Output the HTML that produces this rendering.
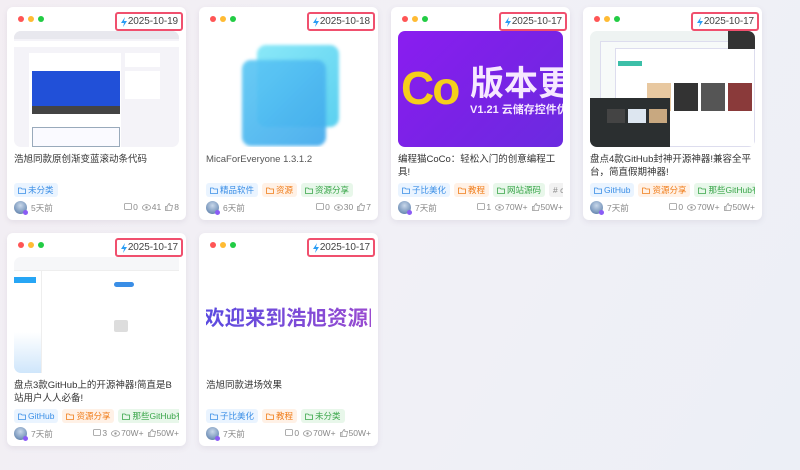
<!DOCTYPE html>
<html><head><meta charset="utf-8"><style>
*{margin:0;padding:0;box-sizing:border-box}
body{width:800px;height:470px;overflow:hidden;position:relative;font-family:"Liberation Sans","Noto Sans CJK SC",sans-serif;background:linear-gradient(120deg,#f3eef3 0%,#f1f0f6 50%,#eceff6 100%)}
.card{position:absolute;width:179px;height:213px;background:#fff;border-radius:6px;box-shadow:0 2px 6px rgba(120,110,140,.12);overflow:hidden}
.dots{position:absolute;left:11px;top:9px}
.dots i{position:absolute;top:0;width:6px;height:6px;border-radius:50%}
.date{position:absolute;right:3px;top:5px;height:19px;border:2px solid #f0506e;border-radius:3px;font-size:10px;color:#444;line-height:15px;padding:0 3px 0 3px;display:flex;align-items:center;letter-spacing:-.1px}
.img{position:absolute;left:7px;top:24px;width:165px;height:116px;border-radius:7px;overflow:hidden}
.title{position:absolute;left:7px;top:146px;width:165px;font-size:9.5px;line-height:13px;color:#333}
.tags{position:absolute;left:7px;top:176px;width:165px;height:14px;white-space:nowrap;overflow:hidden;font-size:8.5px}
.tag{display:inline-block;height:14px;line-height:14px;padding:0 4px;border-radius:3px;margin-right:4px;vertical-align:top}
.tag svg{vertical-align:-1px;margin-right:2px}
.b{background:#eaf4ff;color:#3a8ee6}.o{background:#fff1e6;color:#f07d1a}.g{background:#e8f7ea;color:#3aa64a}.gr{background:#f2f2f2;color:#888}
.foot{position:absolute;left:7px;top:194px;width:165px;height:14px;font-size:8.5px;color:#888}
.av{position:absolute;left:0;top:0;width:13px;height:13px;border-radius:50%;background:radial-gradient(circle at 50% 35%,#c9d8ea 0,#7f9cc0 60%,#4d6d99 100%)}
.av:after{content:"";position:absolute;right:-1px;bottom:-1px;width:5px;height:5px;border-radius:50%;background:#8a5cf5}
.ago{position:absolute;left:17px;top:1px}
.st{position:absolute;right:0;top:1px;display:flex;gap:4px;align-items:center}
.st span{display:flex;align-items:center;gap:1px}
</style></head><body>

<div class="card" style="left:7px;top:7px">
 <div class="dots"><i style="left:0;background:#f55"></i><i style="left:10px;background:#fb3"></i><i style="left:20px;background:#2c4"></i></div>
 <div class="date"><svg width="8" height="10" viewBox="0 0 8 10"><path d="M5 0L1 6h3L3 10l4-6H4z" fill="#2a9df4"/></svg>2025-10-19</div>
 <div class="img" style="background:#f4f3f8">
  <div style="position:absolute;left:0;top:0;width:165px;height:8px;background:#e8e8ee"></div>
  <div style="position:absolute;left:0;top:10px;width:165px;height:6px;background:#fff"></div>
  <div style="position:absolute;left:15px;top:22px;width:92px;height:94px;background:#fff"></div>
  <div style="position:absolute;left:18px;top:40px;width:88px;height:35px;background:#2150d8"></div>
  <div style="position:absolute;left:18px;top:75px;width:88px;height:8px;background:#444"></div>
  <div style="position:absolute;left:18px;top:96px;width:88px;height:20px;border:1px solid #9ab;background:#fafaff"></div>
  <div style="position:absolute;left:111px;top:22px;width:35px;height:14px;background:#fff"></div>
  <div style="position:absolute;left:111px;top:40px;width:35px;height:28px;background:#fff"></div>
 </div>
 <div class="title">浩旭同款原创渐变蓝滚动条代码</div>
 <div class="tags"><span class="tag b"><svg width="8" height="7" viewBox="0 0 8 7"><path d="M.5 1h2.5l1 1h3.5v4.5h-7z" fill="none" stroke="currentColor" stroke-width=".8"/></svg>未分类</span></div>
 <div class="foot"><div class="av"></div><span class="ago">5天前</span><div class="st"><span><svg width="8" height="8" viewBox="0 0 8 8"><rect x=".5" y=".5" width="7" height="6" rx="1" fill="none" stroke="#999" stroke-width=".8"/></svg>0</span><span><svg width="9" height="7" viewBox="0 0 9 7"><ellipse cx="4.5" cy="3.5" rx="4" ry="2.8" fill="none" stroke="#999" stroke-width=".8"/><circle cx="4.5" cy="3.5" r="1.2" fill="#999"/></svg>41</span><span><svg width="8" height="8" viewBox="0 0 8 8"><path d="M.5 3.5h1.5v4h-1.5zM2 3.5l2-3c1 0 1 1 .8 2h2.7l-1 5H2" fill="none" stroke="#999" stroke-width=".8"/></svg>8</span></div></div>
</div>

<div class="card" style="left:199px;top:7px">
 <div class="dots"><i style="left:0;background:#f55"></i><i style="left:10px;background:#fb3"></i><i style="left:20px;background:#2c4"></i></div>
 <div class="date"><svg width="8" height="10" viewBox="0 0 8 10"><path d="M5 0L1 6h3L3 10l4-6H4z" fill="#2a9df4"/></svg>2025-10-18</div>
 <div class="img" style="background:#fff">
  <div style="position:absolute;left:51px;top:14px;width:82px;height:82px;border-radius:9px;background:linear-gradient(135deg,#8ae8f8,#5bd0f0);filter:blur(1.5px)"></div>
  <div style="position:absolute;left:36px;top:29px;width:84px;height:86px;border-radius:9px;background:linear-gradient(135deg,#5cc8f4,#41a9ec);opacity:.92;filter:blur(1.5px)"></div>
 </div>
 <div class="title" style="color:#555">MicaForEveryone 1.3.1.2</div>
 <div class="tags"><span class="tag b"><svg width="8" height="7" viewBox="0 0 8 7"><path d="M.5 1h2.5l1 1h3.5v4.5h-7z" fill="none" stroke="currentColor" stroke-width=".8"/></svg>精品软件</span><span class="tag o"><svg width="8" height="7" viewBox="0 0 8 7"><path d="M.5 1h2.5l1 1h3.5v4.5h-7z" fill="none" stroke="currentColor" stroke-width=".8"/></svg>资源</span><span class="tag g"><svg width="8" height="7" viewBox="0 0 8 7"><path d="M.5 1h2.5l1 1h3.5v4.5h-7z" fill="none" stroke="currentColor" stroke-width=".8"/></svg>资源分享</span></div>
 <div class="foot"><div class="av"></div><span class="ago">6天前</span><div class="st"><span><svg width="8" height="8" viewBox="0 0 8 8"><rect x=".5" y=".5" width="7" height="6" rx="1" fill="none" stroke="#999" stroke-width=".8"/></svg>0</span><span><svg width="9" height="7" viewBox="0 0 9 7"><ellipse cx="4.5" cy="3.5" rx="4" ry="2.8" fill="none" stroke="#999" stroke-width=".8"/><circle cx="4.5" cy="3.5" r="1.2" fill="#999"/></svg>30</span><span><svg width="8" height="8" viewBox="0 0 8 8"><path d="M.5 3.5h1.5v4h-1.5zM2 3.5l2-3c1 0 1 1 .8 2h2.7l-1 5H2" fill="none" stroke="#999" stroke-width=".8"/></svg>7</span></div></div>
</div>

<div class="card" style="left:391px;top:7px">
 <div class="dots"><i style="left:0;background:#f55"></i><i style="left:10px;background:#fb3"></i><i style="left:20px;background:#2c4"></i></div>
 <div class="date"><svg width="8" height="10" viewBox="0 0 8 10"><path d="M5 0L1 6h3L3 10l4-6H4z" fill="#2a9df4"/></svg>2025-10-17</div>
 <div class="img" style="background:linear-gradient(135deg,#8a1df0,#7a22e6 50%,#6b2be0);">
  <div style="position:absolute;left:3px;top:32px;font:bold 46px/50px 'Liberation Sans',sans-serif;color:#f5cf1b;letter-spacing:-2px">Co</div>
  <div style="position:absolute;left:72px;top:30px;font:bold 34px/40px 'Noto Sans CJK SC',sans-serif;color:#f6e8ff;white-space:nowrap">版本更</div>
  <div style="position:absolute;left:72px;top:72px;font:bold 11px/14px 'Liberation Sans','Noto Sans CJK SC',sans-serif;color:#f6e8ff;white-space:nowrap">V1.21 云储存控件优</div>
 </div>
 <div class="title">编程猫CoCo：轻松入门的创意编程工具!</div>
 <div class="tags"><span class="tag b"><svg width="8" height="7" viewBox="0 0 8 7"><path d="M.5 1h2.5l1 1h3.5v4.5h-7z" fill="none" stroke="currentColor" stroke-width=".8"/></svg>子比美化</span><span class="tag o"><svg width="8" height="7" viewBox="0 0 8 7"><path d="M.5 1h2.5l1 1h3.5v4.5h-7z" fill="none" stroke="currentColor" stroke-width=".8"/></svg>教程</span><span class="tag g"><svg width="8" height="7" viewBox="0 0 8 7"><path d="M.5 1h2.5l1 1h3.5v4.5h-7z" fill="none" stroke="currentColor" stroke-width=".8"/></svg>网站源码</span><span class="tag gr"># coco</span><span class="tag gr"> </span></div>
 <div class="foot"><div class="av"></div><span class="ago">7天前</span><div class="st"><span><svg width="8" height="8" viewBox="0 0 8 8"><rect x=".5" y=".5" width="7" height="6" rx="1" fill="none" stroke="#999" stroke-width=".8"/></svg>1</span><span><svg width="9" height="7" viewBox="0 0 9 7"><ellipse cx="4.5" cy="3.5" rx="4" ry="2.8" fill="none" stroke="#999" stroke-width=".8"/><circle cx="4.5" cy="3.5" r="1.2" fill="#999"/></svg>70W+</span><span><svg width="8" height="8" viewBox="0 0 8 8"><path d="M.5 3.5h1.5v4h-1.5zM2 3.5l2-3c1 0 1 1 .8 2h2.7l-1 5H2" fill="none" stroke="#999" stroke-width=".8"/></svg>50W+</span></div></div>
</div>

<div class="card" style="left:583px;top:7px">
 <div class="dots"><i style="left:0;background:#f55"></i><i style="left:10px;background:#fb3"></i><i style="left:20px;background:#2c4"></i></div>
 <div class="date"><svg width="8" height="10" viewBox="0 0 8 10"><path d="M5 0L1 6h3L3 10l4-6H4z" fill="#2a9df4"/></svg>2025-10-17</div>
 <div class="img" style="background:#eef3f2">
  <div style="position:absolute;left:10px;top:10px;width:155px;height:106px;background:#f7faf9;border:1px solid #dde"></div>
  <div style="position:absolute;left:25px;top:17px;width:140px;height:99px;background:#fff;border:1px solid #dde"></div>
  <div style="position:absolute;left:28px;top:30px;width:24px;height:5px;background:#3cbfa8"></div>
  <div style="position:absolute;left:57px;top:52px;width:24px;height:28px;background:#e8c8a0"></div>
  <div style="position:absolute;left:84px;top:52px;width:24px;height:28px;background:#333"></div>
  <div style="position:absolute;left:111px;top:52px;width:24px;height:28px;background:#555"></div>
  <div style="position:absolute;left:138px;top:52px;width:24px;height:28px;background:#8a3a3a"></div>
  <div style="position:absolute;left:138px;top:0;width:27px;height:18px;background:#333"></div>
  <div style="position:absolute;left:0;top:67px;width:80px;height:49px;background:#2b2f30"></div>
  <div style="position:absolute;left:17px;top:78px;width:18px;height:14px;background:#444"></div>
  <div style="position:absolute;left:38px;top:78px;width:18px;height:14px;background:#dde6f0"></div>
  <div style="position:absolute;left:59px;top:78px;width:18px;height:14px;background:#c8a880"></div>
 </div>
 <div class="title">盘点4款GitHub封神开源神器!兼容全平台，简直假期神器!</div>
 <div class="tags"><span class="tag b"><svg width="8" height="7" viewBox="0 0 8 7"><path d="M.5 1h2.5l1 1h3.5v4.5h-7z" fill="none" stroke="currentColor" stroke-width=".8"/></svg>GitHub</span><span class="tag o"><svg width="8" height="7" viewBox="0 0 8 7"><path d="M.5 1h2.5l1 1h3.5v4.5h-7z" fill="none" stroke="currentColor" stroke-width=".8"/></svg>资源分享</span><span class="tag g"><svg width="8" height="7" viewBox="0 0 8 7"><path d="M.5 1h2.5l1 1h3.5v4.5h-7z" fill="none" stroke="currentColor" stroke-width=".8"/></svg>那些GitHub有趣的项目</span></div>
 <div class="foot"><div class="av"></div><span class="ago">7天前</span><div class="st"><span><svg width="8" height="8" viewBox="0 0 8 8"><rect x=".5" y=".5" width="7" height="6" rx="1" fill="none" stroke="#999" stroke-width=".8"/></svg>0</span><span><svg width="9" height="7" viewBox="0 0 9 7"><ellipse cx="4.5" cy="3.5" rx="4" ry="2.8" fill="none" stroke="#999" stroke-width=".8"/><circle cx="4.5" cy="3.5" r="1.2" fill="#999"/></svg>70W+</span><span><svg width="8" height="8" viewBox="0 0 8 8"><path d="M.5 3.5h1.5v4h-1.5zM2 3.5l2-3c1 0 1 1 .8 2h2.7l-1 5H2" fill="none" stroke="#999" stroke-width=".8"/></svg>50W+</span></div></div>
</div>

<div class="card" style="left:7px;top:233px">
 <div class="dots"><i style="left:0;background:#f55"></i><i style="left:10px;background:#fb3"></i><i style="left:20px;background:#2c4"></i></div>
 <div class="date"><svg width="8" height="10" viewBox="0 0 8 10"><path d="M5 0L1 6h3L3 10l4-6H4z" fill="#2a9df4"/></svg>2025-10-17</div>
 <div class="img" style="background:#fff;border-radius:7px 0 0 7px">
  <div style="position:absolute;left:0;top:0;width:165px;height:14px;background:#f6f7f9;border-bottom:1px solid #eee"></div>
  <div style="position:absolute;left:0;top:14px;width:27px;height:102px;background:linear-gradient(180deg,#fff 60%,#cfe6fb)"></div>
  <div style="position:absolute;left:0;top:20px;width:22px;height:6px;background:#27a6f5"></div>
  <div style="position:absolute;left:27px;top:14px;width:1px;height:102px;background:#eee"></div>
  <div style="position:absolute;left:100px;top:25px;width:20px;height:5px;border-radius:3px;background:#3a8ee6"></div>
  <div style="position:absolute;left:100px;top:63px;width:14px;height:12px;border-radius:2px;background:#ddd"></div>
 </div>
 <div class="title">盘点3款GitHub上的开源神器!简直是B站用户人人必备!</div>
 <div class="tags"><span class="tag b"><svg width="8" height="7" viewBox="0 0 8 7"><path d="M.5 1h2.5l1 1h3.5v4.5h-7z" fill="none" stroke="currentColor" stroke-width=".8"/></svg>GitHub</span><span class="tag o"><svg width="8" height="7" viewBox="0 0 8 7"><path d="M.5 1h2.5l1 1h3.5v4.5h-7z" fill="none" stroke="currentColor" stroke-width=".8"/></svg>资源分享</span><span class="tag g"><svg width="8" height="7" viewBox="0 0 8 7"><path d="M.5 1h2.5l1 1h3.5v4.5h-7z" fill="none" stroke="currentColor" stroke-width=".8"/></svg>那些GitHub有趣的项目</span></div>
 <div class="foot"><div class="av"></div><span class="ago">7天前</span><div class="st"><span><svg width="8" height="8" viewBox="0 0 8 8"><rect x=".5" y=".5" width="7" height="6" rx="1" fill="none" stroke="#999" stroke-width=".8"/></svg>3</span><span><svg width="9" height="7" viewBox="0 0 9 7"><ellipse cx="4.5" cy="3.5" rx="4" ry="2.8" fill="none" stroke="#999" stroke-width=".8"/><circle cx="4.5" cy="3.5" r="1.2" fill="#999"/></svg>70W+</span><span><svg width="8" height="8" viewBox="0 0 8 8"><path d="M.5 3.5h1.5v4h-1.5zM2 3.5l2-3c1 0 1 1 .8 2h2.7l-1 5H2" fill="none" stroke="#999" stroke-width=".8"/></svg>50W+</span></div></div>
</div>

<div class="card" style="left:199px;top:233px">
 <div class="dots"><i style="left:0;background:#f55"></i><i style="left:10px;background:#fb3"></i><i style="left:20px;background:#2c4"></i></div>
 <div class="date"><svg width="8" height="10" viewBox="0 0 8 10"><path d="M5 0L1 6h3L3 10l4-6H4z" fill="#2a9df4"/></svg>2025-10-17</div>
 <div class="img" style="background:#fff">
  <div style="position:absolute;left:-2px;top:46px;width:170px;font:bold 20.5px/26px 'Noto Sans CJK SC',sans-serif;white-space:nowrap;background:linear-gradient(90deg,#5a4be0,#9a4bd0);-webkit-background-clip:text;background-clip:text;color:transparent">欢迎来到浩旭资源网</div>
 </div>
 <div class="title">浩旭同款进场效果</div>
 <div class="tags"><span class="tag b"><svg width="8" height="7" viewBox="0 0 8 7"><path d="M.5 1h2.5l1 1h3.5v4.5h-7z" fill="none" stroke="currentColor" stroke-width=".8"/></svg>子比美化</span><span class="tag o"><svg width="8" height="7" viewBox="0 0 8 7"><path d="M.5 1h2.5l1 1h3.5v4.5h-7z" fill="none" stroke="currentColor" stroke-width=".8"/></svg>教程</span><span class="tag g"><svg width="8" height="7" viewBox="0 0 8 7"><path d="M.5 1h2.5l1 1h3.5v4.5h-7z" fill="none" stroke="currentColor" stroke-width=".8"/></svg>未分类</span></div>
 <div class="foot"><div class="av"></div><span class="ago">7天前</span><div class="st"><span><svg width="8" height="8" viewBox="0 0 8 8"><rect x=".5" y=".5" width="7" height="6" rx="1" fill="none" stroke="#999" stroke-width=".8"/></svg>0</span><span><svg width="9" height="7" viewBox="0 0 9 7"><ellipse cx="4.5" cy="3.5" rx="4" ry="2.8" fill="none" stroke="#999" stroke-width=".8"/><circle cx="4.5" cy="3.5" r="1.2" fill="#999"/></svg>70W+</span><span><svg width="8" height="8" viewBox="0 0 8 8"><path d="M.5 3.5h1.5v4h-1.5zM2 3.5l2-3c1 0 1 1 .8 2h2.7l-1 5H2" fill="none" stroke="#999" stroke-width=".8"/></svg>50W+</span></div></div>
</div>

</body></html>
